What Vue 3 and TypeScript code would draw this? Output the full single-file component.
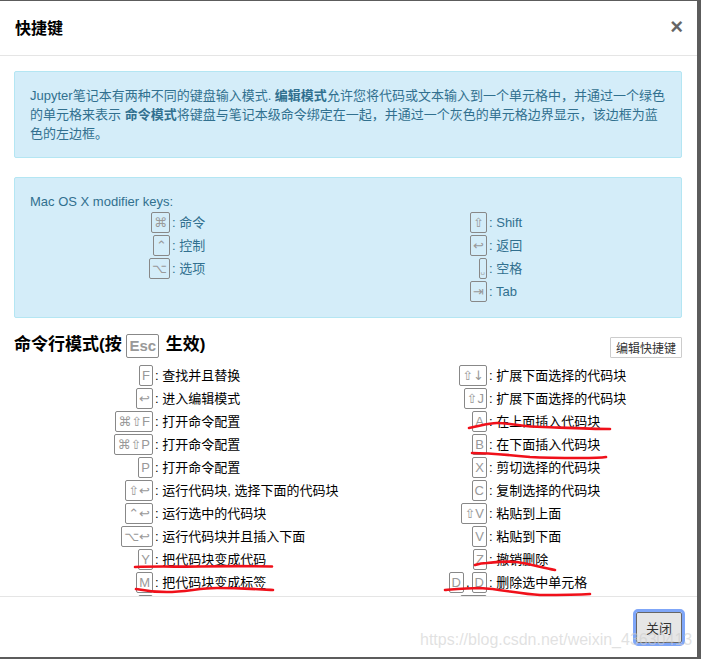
<script setup lang="ts">
interface Shortcut {
  keys: string[];
  text: string;
}

const modifierLeft: Shortcut[] = [
  { keys: ["⌘"], text: "命令" },
  { keys: ["⌃"], text: "控制" },
  { keys: ["⌥"], text: "选项" },
];

const modifierRight: Shortcut[] = [
  { keys: ["⇧"], text: "Shift" },
  { keys: ["↩"], text: "返回" },
  { keys: ["␣"], text: "空格" },
  { keys: ["⇥"], text: "Tab" },
];

const commandLeft: Shortcut[] = [
  { keys: ["F"], text: "查找并且替换" },
  { keys: ["↩"], text: "进入编辑模式" },
  { keys: ["⌘⇧F"], text: "打开命令配置" },
  { keys: ["⌘⇧P"], text: "打开命令配置" },
  { keys: ["P"], text: "打开命令配置" },
  { keys: ["⇧↩"], text: "运行代码块, 选择下面的代码块" },
  { keys: ["⌃↩"], text: "运行选中的代码块" },
  { keys: ["⌥↩"], text: "运行代码块并且插入下面" },
  { keys: ["Y"], text: "把代码块变成代码" },
  { keys: ["M"], text: "把代码块变成标签" },
];

const commandRight: Shortcut[] = [
  { keys: ["⇧↓"], text: "扩展下面选择的代码块" },
  { keys: ["⇧J"], text: "扩展下面选择的代码块" },
  { keys: ["A"], text: "在上面插入代码块" },
  { keys: ["B"], text: "在下面插入代码块" },
  { keys: ["X"], text: "剪切选择的代码块" },
  { keys: ["C"], text: "复制选择的代码块" },
  { keys: ["⇧V"], text: "粘贴到上面" },
  { keys: ["V"], text: "粘贴到下面" },
  { keys: ["Z"], text: "撤销删除" },
  { keys: ["D", "D"], text: "删除选中单元格" },
];

const scribbles: string[] = [
  "M469 428 C480 426 488 423 497 423 C512 423 522 427 543 427 C570 428 590 429 610 429",
  "M472 453 C490 453 510 455 530 457 C548 458 565 458 580 458 C590 458 600 458 606 457",
  "M135 567 C160 566 180 567 200 566.5 C225 566 250 566 272 566.5",
  "M136 589 C146 591 156 592 167 592 C185 592 200 588 217 588 C238 588 255 589 273 590",
  "M475 565 C478 564 482 563 487 563 C497 562 508 561 517 562 C530 564 543 568 555 570",
  "M445 590 C457 589 468 588 480 588 C500 589 520 594 540 595 C557 595 575 595 590 594",
];
</script>

<template>
  <div class="modal">
    <div class="modal_header">
      <h4 class="modal_title">快捷键</h4>
      <span class="close">×</span>
    </div>

    <div class="modal_body">
      <div class="alert">
        Jupyter笔记本有两种不同的键盘输入模式. <b>编辑模式</b>允许您将代码或文本输入到一个单元格中，并通过一个绿色的单元格来表示 <b>命令模式</b>将键盘与笔记本级命令绑定在一起，并通过一个灰色的单元格边界显示，该边框为蓝色的左边框。
      </div>

      <div class="alert alert_keys">
        <div>Mac OS X modifier keys:</div>
        <div class="columns">
          <div class="column">
            <div class="row" v-for="item in modifierLeft" :key="item.text">
              <span class="keys"><kbd v-for="k in item.keys" :key="k">{{ k }}</kbd></span>
              <span class="desc">: {{ item.text }}</span>
            </div>
          </div>
          <div class="column">
            <div class="row" v-for="item in modifierRight" :key="item.text">
              <span class="keys"><kbd v-for="k in item.keys" :key="k" :class="{ space_key: k === '␣' }">{{ k }}</kbd></span>
              <span class="desc">: {{ item.text }}</span>
            </div>
          </div>
        </div>
      </div>

      <div class="section_head">
        <h4 class="section_title">命令行模式(按 <kbd class="esc">Esc</kbd> 生效)</h4>
        <button class="edit_btn">编辑快捷键</button>
      </div>

      <div class="columns commands">
        <div class="column">
          <div class="row" v-for="item in commandLeft" :key="item.keys.join()">
            <span class="keys"><kbd v-for="k in item.keys" :key="k">{{ k }}</kbd></span>
            <span class="desc">: {{ item.text }}</span>
          </div>
          <div class="row">
            <span class="keys"><kbd class="cut_key">&nbsp;</kbd></span>
          </div>
        </div>
        <div class="column">
          <div class="row" v-for="item in commandRight" :key="item.keys.join()">
            <span class="keys">
              <template v-for="(k, i) in item.keys" :key="i">
                <span v-if="i > 0" class="comma">,</span>
                <kbd :class="{ arrow_key: k.includes('↓') }">{{ k }}</kbd>
              </template>
            </span>
            <span class="desc">: {{ item.text }}</span>
          </div>
          <div class="row">
            <span class="keys"><kbd class="cut_key wide">&nbsp;</kbd></span>
          </div>
        </div>
      </div>
    </div>

    <div class="modal_footer">
      <button class="close_btn">关闭</button>
    </div>

    <svg class="scribbles" width="701" height="659" viewBox="0 0 701 659">
      <path v-for="d in scribbles" :key="d" :d="d" fill="none" stroke="#f0101a" stroke-width="2.6" stroke-linecap="round" />
    </svg>
    <span class="watermark">https://blog.csdn.net/weixin_43630413</span>
  </div>
</template>

<style>
html,
body {
  margin: 0;
  background: #5c5c5c;
  overflow: hidden;
}
</style>

<style scoped>
.modal {
  width: 697px;
  height: 656px;
  margin-top: 1px;
  background: #fff;
  display: flex;
  flex-direction: column;
  font-family: "Liberation Sans", "Noto Sans CJK SC", sans-serif;
  font-size: 13px;
  line-height: 19px;
  color: #000;
}

.modal_header {
  height: 54px;
  flex: none;
  padding: 0 15px;
  display: flex;
  align-items: center;
  justify-content: space-between;
  border-bottom: 1px solid #e5e5e5;
}

.modal_title {
  margin: 0;
  font-size: 16px;
  font-weight: 700;
}

.close {
  font-size: 22px;
  font-weight: 700;
  color: #000;
  opacity: 0.6;
  margin: -3px -1px 0 0;
}

.modal_body {
  flex: 1;
  min-height: 0;
  overflow: hidden;
  padding: 15px 15px 0 14px;
}

.alert {
  padding: 14px 15px;
  margin-bottom: 19px;
  background: #d4edf9;
  border: 1px solid #b4e6f3;
  border-radius: 2px;
  color: #31708f;
}

.alert_keys {
  margin-bottom: 0;
}

.columns {
  display: flex;
}

.column {
  width: 50%;
}

.alert_keys .column:last-child {
  margin-left: -1px;
}

.row {
  display: flex;
  height: 23px;
  align-items: center;
}

.keys {
  width: 140px;
  flex: none;
  display: flex;
  justify-content: flex-end;
  align-items: center;
}

.desc {
  margin-left: 2px;
  white-space: nowrap;
}

kbd {
  display: inline-block;
  padding: 0 2px;
  height: 19px;
  line-height: 19px;
  border: 1px solid #888;
  border-radius: 2px;
  color: #999;
  font-family: "Liberation Sans", "DejaVu Sans", sans-serif;
  font-size: 13px;
  overflow: hidden;
}

.arrow_key {
  font-family: "DejaVu Sans", sans-serif;
}

.space_key {
  padding: 0 1px;
  font-size: 7px;
  line-height: 24px;
}

.cut_key {
  width: 9px;
}

.cut_key.wide {
  width: 21px;
}

.comma {
  margin: 0 2px;
}

.section_head {
  display: flex;
  justify-content: space-between;
  align-items: center;
  height: 36px;
  padding-top: 10px;
}

.section_title {
  margin: 0;
  font-size: 17px;
  font-weight: 700;
}

.esc {
  font-size: 15px;
  font-weight: 700;
  height: 22px;
  line-height: 22px;
  margin-right: 2px;
  vertical-align: middle;
}

.edit_btn {
  height: 21px;
  padding: 0 5px;
  background: #fff;
  border: 1px solid #ccc;
  border-radius: 1px;
  font: 12px "Liberation Sans", "Noto Sans CJK SC", sans-serif;
  color: #333;
  margin-top: 3px;
}

.commands .keys {
  width: 139px;
}

.modal_footer {
  flex: none;
  height: 61px;
  border-top: 1px solid #e5e5e5;
  display: flex;
  justify-content: flex-end;
  align-items: flex-start;
  padding: 15px 15px 0 0;
  box-sizing: border-box;
}

.close_btn {
  width: 46px;
  height: 31px;
  background: #e6e6e6;
  border: 1px solid #666;
  border-radius: 2px;
  outline: 3px solid #7fa6f8;
  outline-offset: 0;
  font: 13px "Liberation Sans", "Noto Sans CJK SC", sans-serif;
  color: #333;
}

.scribbles {
  position: absolute;
  left: 0;
  top: 0;
  pointer-events: none;
}

.watermark {
  position: absolute;
  left: 420px;
  top: 630px;
  font-size: 16px;
  line-height: 20px;
  color: rgba(205, 205, 205, 0.6);
  white-space: nowrap;
}
</style>
